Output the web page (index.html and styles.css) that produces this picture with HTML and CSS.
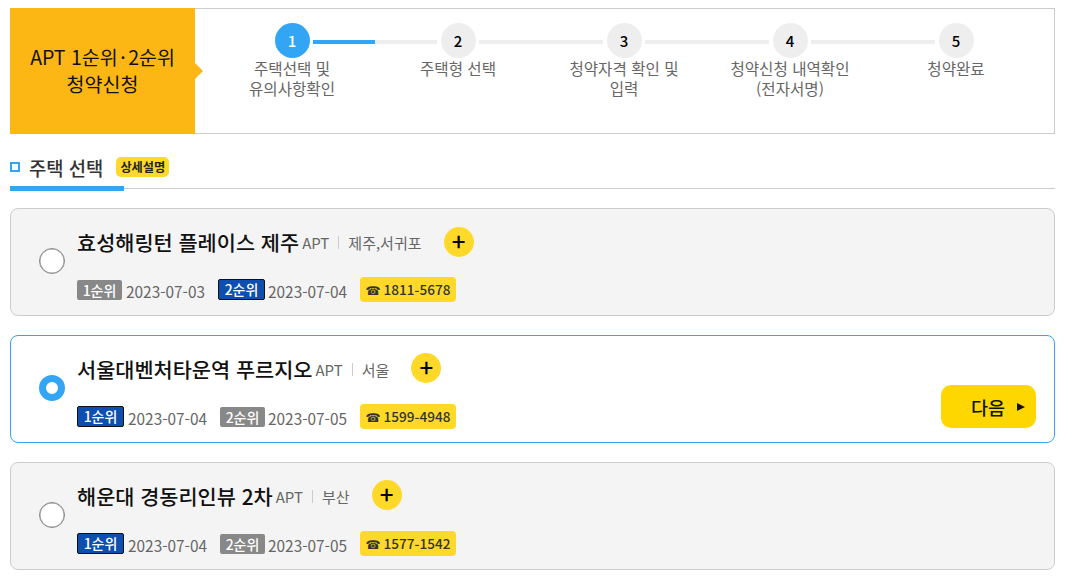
FILE: index.html
```html
<!DOCTYPE html>
<html lang="ko">
<head>
    <meta charset="UTF-8">
    <title>청약신청</title>
    <link rel="stylesheet" href="styles.css">
</head>
<body>
    <div class="apply-head">
        <div class="apply-name">
            <div>APT 1순위<span class="dot">·</span>2순위<br>청약신청</div>
        </div>
        <ol class="steps">
            <li class="step active">
                <div class="step-top"><span class="step-num">1</span><span class="step-line"><i></i></span></div>
                <p>주택선택 및<br>유의사항확인</p>
            </li>
            <li class="step">
                <div class="step-top"><span class="step-num">2</span><span class="step-line"></span></div>
                <p>주택형 선택</p>
            </li>
            <li class="step">
                <div class="step-top"><span class="step-num">3</span><span class="step-line"></span></div>
                <p>청약자격 확인 및<br>입력</p>
            </li>
            <li class="step">
                <div class="step-top"><span class="step-num">4</span><span class="step-line"></span></div>
                <p>청약신청 내역확인<br>(전자서명)</p>
            </li>
            <li class="step">
                <div class="step-top"><span class="step-num">5</span></div>
                <p>청약완료</p>
            </li>
        </ol>
    </div>

    <div class="section-title">
        <span class="title-mark"></span>
        <h2>주택 선택</h2>
        <span class="detail-tag">상세설명</span>
    </div>

    <div class="house-list">
        <div class="house">
            <span class="radio"></span>
            <div class="house-body">
                <div class="house-name">
                    <strong>효성해링턴 플레이스 제주</strong>
                    <span class="kind">APT</span>
                    <span class="area">제주,서귀포</span>
                    <span class="plus">+</span>
                </div>
                <div class="house-info">
                    <span class="rank">1순위</span><span class="date">2023-07-03</span>
                    <span class="rank on">2순위</span><span class="date">2023-07-04</span>
                    <span class="tel"><i>☎</i> 1811-5678</span>
                </div>
            </div>
        </div>

        <div class="house selected">
            <span class="radio"></span>
            <div class="house-body">
                <div class="house-name">
                    <strong>서울대벤처타운역 푸르지오</strong>
                    <span class="kind">APT</span>
                    <span class="area">서울</span>
                    <span class="plus">+</span>
                </div>
                <div class="house-info">
                    <span class="rank on">1순위</span><span class="date">2023-07-04</span>
                    <span class="rank">2순위</span><span class="date">2023-07-05</span>
                    <span class="tel"><i>☎</i> 1599-4948</span>
                </div>
            </div>
            <button class="next-btn">다음<span class="next-arrow"></span></button>
        </div>

        <div class="house">
            <span class="radio"></span>
            <div class="house-body">
                <div class="house-name">
                    <strong>해운대 경동리인뷰 2차</strong>
                    <span class="kind">APT</span>
                    <span class="area">부산</span>
                    <span class="plus">+</span>
                </div>
                <div class="house-info">
                    <span class="rank on">1순위</span><span class="date">2023-07-04</span>
                    <span class="rank">2순위</span><span class="date">2023-07-05</span>
                    <span class="tel"><i>☎</i> 1577-1542</span>
                </div>
            </div>
        </div>
    </div>
</body>
</html>
```

FILE: styles.css
```css
* {
    box-sizing: border-box;
}

body {
    margin: 8px 14px 0 10px;
    font-family: "Noto Sans CJK KR", "Noto Sans", sans-serif;
    color: #666;
    background-color: #fff;
}

/* top step bar */
.apply-head {
    display: flex;
    height: 126px;
    border: 1px solid #ccc;
    border-left: none;
}

.apply-name {
    position: relative;
    display: flex;
    align-items: center;
    justify-content: center;
    width: 185px;
    margin: -1px 0;
    padding-bottom: 2px;
    background-color: #fdb714;
    color: #111;
    font-size: 19.5px;
    line-height: 27px;
    text-align: center;
}

.apply-name .dot {
    margin: 0 2.5px;
}

.apply-name::after {
    content: "";
    position: absolute;
    left: 100%;
    top: 50%;
    margin-top: -8px;
    border-left: 8px solid #fdb714;
    border-top: 8px solid transparent;
    border-bottom: 8px solid transparent;
}

.steps {
    display: flex;
    margin: 0;
    padding: 14px 0 0 14px;
    list-style: none;
}

.step {
    width: 166px;
}

.step-top {
    position: relative;
    display: flex;
    justify-content: center;
    height: 35px;
}

.step-num {
    width: 35px;
    height: 35px;
    border-radius: 50%;
    background-color: #eee;
    color: #000;
    font-size: 15px;
    font-weight: 500;
    line-height: 35px;
    text-align: center;
}

.step.active .step-num {
    background-color: #33a5f5;
    color: #fff;
}

.step-line {
    position: absolute;
    left: 104px;
    top: 17px;
    width: 124px;
    height: 4px;
    background-color: #eee;
}

.step-line i {
    display: block;
    width: 62px;
    height: 4px;
    background-color: #33a5f5;
}

.step p {
    margin: 0;
    font-size: 15.6px;
    line-height: 20px;
    text-align: center;
}

/* section title */
.section-title {
    position: relative;
    display: flex;
    align-items: center;
    height: 55px;
    border-bottom: 1px solid #ccc;
    padding: 14px 0 2px;
}

.section-title::after {
    content: "";
    position: absolute;
    left: 0;
    bottom: -3px;
    width: 114px;
    height: 5px;
    background-color: #33a5f5;
}

.title-mark {
    width: 10px;
    height: 10px;
    border: 2px solid #33a5f5;
    margin-right: 9px;
}

.section-title h2 {
    margin: 0 13px 0 0;
    color: #333;
    font-size: 18.8px;
    font-weight: 500;
}

.detail-tag {
    padding: 0 4px;
    border-radius: 5px;
    background-color: #ffd92a;
    color: #222;
    font-size: 12.2px;
    font-weight: 700;
    line-height: 20px;
}

/* house cards */
.house-list {
    display: flex;
    flex-direction: column;
    gap: 19px;
    margin-top: 19px;
}

.house {
    display: flex;
    height: 108px;
    padding-left: 28px;
    border: 1px solid #ccc;
    border-radius: 8px;
    background-color: #f4f4f4;
}

.house.selected {
    border-color: #33a5f5;
    background-color: #fff;
}

.radio {
    width: 26px;
    height: 26px;
    margin: 39px 12px 0 0;
    border: 1px solid #888;
    border-radius: 50%;
    background-color: #fff;
    box-shadow: inset 0 0 0 0.5px #999;
}

.selected .radio {
    border: 7px solid #33a5f5;
    box-shadow: none;
}

.house-body {
    padding-top: 18px;
}

.house-name {
    display: flex;
    align-items: center;
    height: 30px;
    color: #666;
}

.house-name strong {
    color: #111;
    font-size: 20.8px;
    font-weight: 500;
}

.kind {
    margin-left: 3px;
    font-size: 15px;
}

.area {
    margin-left: 9px;
    padding-left: 9px;
    font-size: 15px;
    line-height: 13px;
    border-left: 1px solid #ccc;
}

.plus {
    width: 30px;
    height: 30px;
    margin: 0 0 2px 22px;
    border-radius: 50%;
    background-color: #ffd92a;
    color: #000;
    font-size: 24px;
    font-weight: 500;
    line-height: 28px;
    text-align: center;
}

.house:first-child .plus {
    margin-bottom: 0;
}

.house-info {
    display: flex;
    align-items: center;
    height: 25px;
    margin-top: 20px;
}

.rank {
    width: 45px;
    height: 20px;
    border-radius: 2px;
    background-color: #888;
    color: #fff;
    font-size: 14px;
    font-weight: 500;
    line-height: 20px;
    text-align: center;
}

.rank.on {
    width: 47px;
    height: 21px;
    border: 1px solid #111;
    background-color: #0d4fb0;
    line-height: 19px;
}

.date {
    width: 79px;
    margin: 2px 13px 0 4px;
    font-size: 15.4px;
    white-space: nowrap;
}

.rank:nth-child(3) + .date {
    margin-left: 3px;
}

.tel {
    width: 96px;
    height: 25px;
    border-radius: 4px;
    background-color: #ffd92a;
    color: #333;
    font-size: 13.6px;
    font-weight: 500;
    line-height: 25px;
    text-align: center;
}

.tel i {
    font-family: "DejaVu Sans", sans-serif;
    font-style: normal;
    font-size: 12px;
}

.next-btn {
    align-self: flex-end;
    display: flex;
    align-items: center;
    justify-content: flex-end;
    width: 95px;
    height: 43px;
    margin: 0 18px 14px auto;
    padding: 0 11px 0 0;
    border: none;
    border-radius: 10px;
    background-color: #ffd700;
    color: #111;
    font-family: inherit;
    font-size: 18.5px;
    font-weight: 500;
}

.next-arrow {
    margin-left: 12px;
    border-left: 8px solid #111;
    border-top: 4px solid transparent;
    border-bottom: 4px solid transparent;
}
```
